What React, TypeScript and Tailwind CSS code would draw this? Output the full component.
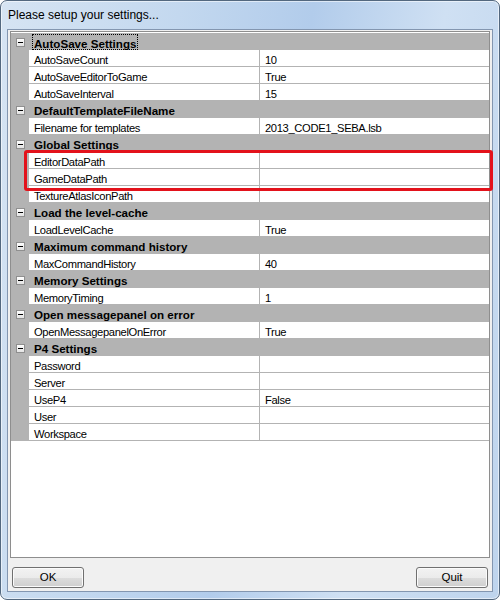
import React from "react";

// ---------------------------------------------------------------------------
// Property grid data
// ---------------------------------------------------------------------------

type Section = {
  title: string;
  focused?: boolean;
  rows: [string, string][];
};

const SECTIONS: Section[] = [
  {
    title: "AutoSave Settings",
    focused: true,
    rows: [
      ["AutoSaveCount", "10"],
      ["AutoSaveEditorToGame", "True"],
      ["AutoSaveInterval", "15"],
    ],
  },
  {
    title: "DefaultTemplateFileName",
    rows: [["Filename for templates", "2013_CODE1_SEBA.lsb"]],
  },
  {
    title: "Global Settings",
    rows: [
      ["EditorDataPath", ""],
      ["GameDataPath", ""],
      ["TextureAtlasIconPath", ""],
    ],
  },
  { title: "Load the level-cache", rows: [["LoadLevelCache", "True"]] },
  { title: "Maximum command history", rows: [["MaxCommandHistory", "40"]] },
  { title: "Memory Settings", rows: [["MemoryTiming", "1"]] },
  {
    title: "Open messagepanel on error",
    rows: [["OpenMessagepanelOnError", "True"]],
  },
  {
    title: "P4 Settings",
    rows: [
      ["Password", ""],
      ["Server", ""],
      ["UseP4", "False"],
      ["User", ""],
      ["Workspace", ""],
    ],
  },
];

// ---------------------------------------------------------------------------
// Rows
// ---------------------------------------------------------------------------

function CategoryRow({ title, focused }: { title: string; focused?: boolean }) {
  return (
    <div className="flex h-[17px] shrink-0 bg-[#b3b3b3]">
      <div className="w-[18px] shrink-0 pl-[5px] pt-[5px]">
        <div className="flex h-[9px] w-[9px] items-center justify-center border border-[#8f8f8f] bg-[linear-gradient(#ffffff,#e4e4e4)]">
          <div className="h-px w-[5px] bg-black" />
        </div>
      </div>
      {focused ? (
        <span className="ml-[3px] mt-px h-[16px] border border-dotted border-black px-px pt-px text-[11.6px] font-bold leading-[15px] text-black">
          {title}
        </span>
      ) : (
        <span className="pl-[5px] pt-[2px] text-[11.6px] font-bold leading-[16px] text-black">
          {title}
        </span>
      )}
    </div>
  );
}

function PropRow({ name, value }: { name: string; value: string }) {
  return (
    <div className="flex h-[17px] shrink-0">
      <div className="w-[18px] shrink-0 bg-[#b3b3b3]" />
      <div className="w-[230px] shrink-0 whitespace-nowrap border-b border-[#b3b3b3] pl-[5px] pt-[2px] text-[11.2px] leading-[16px] tracking-[-0.35px] text-black">
        {name}
      </div>
      <div className="flex-1 whitespace-nowrap border-b border-l border-[#b3b3b3] pl-[5px] pt-[2px] text-[11.2px] leading-[16px] tracking-[-0.35px] text-black">
        {value}
      </div>
    </div>
  );
}

function WinButton({ label }: { label: string }) {
  return (
    <button className="flex h-[21px] w-[72px] items-center justify-center rounded-[3px] border border-[#707070] bg-[linear-gradient(#f2f2f2_0%,#ebebeb_50%,#dddddd_50%,#cfcfcf_100%)] text-[11.5px] text-black shadow-[inset_0_0_0_1px_#fbfbfb]">
      {label}
    </button>
  );
}

// ---------------------------------------------------------------------------
// Main component
// ---------------------------------------------------------------------------

export default function App() {
  return (
    <div className="h-[600px] w-[500px] font-['Liberation_Sans',Arial,sans-serif]">
      <div className="relative flex h-full flex-col rounded-[7px] border border-[#53687f] bg-[linear-gradient(100deg,#d6e4f3_0%,#c3d8ef_30%,#b2cceb_52%,#cfe0f3_74%,#bed4ed_100%)] shadow-[inset_0_0_0_1px_rgba(255,255,255,0.55)]">
        {/* ── Title bar ─────────────────────────────────────────────── */}
        <div className="h-[28px] shrink-0 pl-[7px] pt-[7px] text-[12px] leading-[14px] text-black">
          Please setup your settings...
        </div>

        {/* ── Client area ───────────────────────────────────────────── */}
        <div className="mx-[6px] mb-[7px] flex flex-1 flex-col border border-[#8396b0] bg-[#f0f0f0]">
          <div className="mx-[2px] mt-px flex h-[527px] flex-col border border-[#8e8e8e] bg-white pt-px">
            {SECTIONS.map((s) => (
              <React.Fragment key={s.title}>
                <CategoryRow title={s.title} focused={s.focused} />
                {s.rows.map(([name, value]) => (
                  <PropRow key={name} name={name} value={value} />
                ))}
              </React.Fragment>
            ))}
          </div>

          <div className="mt-[9px] flex justify-between px-[4px]">
            <WinButton label="OK" />
            <WinButton label="Quit" />
          </div>
        </div>

        {/* ── Highlight box ─────────────────────────────────────────── */}
        <div className="pointer-events-none absolute left-[23px] top-[149px] h-[41px] w-[469px] rounded-[3px] border-[3px] border-[#e3121b]" />
      </div>
    </div>
  );
}
